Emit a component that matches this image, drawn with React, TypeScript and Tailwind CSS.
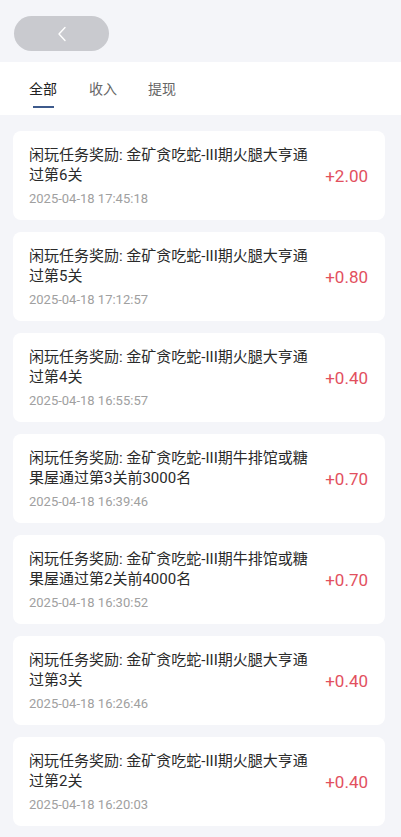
import React from "react";

const items = [
  { title: "闲玩任务奖励: 金矿贪吃蛇-III期火腿大亨通过第6关", time: "2025-04-18 17:45:18", amount: "+2.00" },
  { title: "闲玩任务奖励: 金矿贪吃蛇-III期火腿大亨通过第5关", time: "2025-04-18 17:12:57", amount: "+0.80" },
  { title: "闲玩任务奖励: 金矿贪吃蛇-III期火腿大亨通过第4关", time: "2025-04-18 16:55:57", amount: "+0.40" },
  { title: "闲玩任务奖励: 金矿贪吃蛇-III期牛排馆或糖果屋通过第3关前3000名", time: "2025-04-18 16:39:46", amount: "+0.70" },
  { title: "闲玩任务奖励: 金矿贪吃蛇-III期牛排馆或糖果屋通过第2关前4000名", time: "2025-04-18 16:30:52", amount: "+0.70" },
  { title: "闲玩任务奖励: 金矿贪吃蛇-III期火腿大亨通过第3关", time: "2025-04-18 16:26:46", amount: "+0.40" },
  { title: "闲玩任务奖励: 金矿贪吃蛇-III期火腿大亨通过第2关", time: "2025-04-18 16:20:03", amount: "+0.40" },
];

export default function App() {
  return (
    <div
      className="min-h-[837px] w-[401px] bg-[#f4f5f9] overflow-hidden"
      style={{ fontFamily: 'Roboto, "Noto Sans CJK SC", sans-serif' }}
    >
      <div className="h-[62px] pl-[14px] pt-[16px]">
        <div className="flex h-[35px] w-[95px] items-center justify-center rounded-full bg-[#c9cacf]">
          <svg width="12" height="16" viewBox="0 0 12 16" fill="none">
            <path d="M9 1.5 L3 8 L9 14.5" stroke="#ffffff" strokeWidth="1.4" strokeLinecap="round" strokeLinejoin="round" />
          </svg>
        </div>
      </div>
      <div className="flex h-[53px] items-start bg-white pl-[29px]">
        <div className="flex flex-col items-center pt-[17px]">
          <span className="text-[14px] leading-[20px] text-[#222222]">全部</span>
          <div className="mt-[7px] h-[2px] w-[21px] bg-[#3d5a8c]" />
        </div>
        <span className="ml-[32px] pt-[17px] text-[14px] leading-[20px] text-[#666666]">收入</span>
        <span className="ml-[31px] pt-[17px] text-[14px] leading-[20px] text-[#666666]">提现</span>
      </div>
      <div className="flex flex-col gap-[12px] pl-[13px] pr-[16px] pt-[16px]">
        {items.map((it, i) => (
          <div key={i} className="flex h-[89px] items-center justify-between rounded-[8px] bg-white pl-[16px] pr-[17px]">
            <div className="flex flex-col pt-[1px]">
              <div className="w-[280px] text-[15px] leading-[20px] text-[#2a2a2a]">{it.title}</div>
              <div className="mt-[5px] text-[13px] leading-[17px] text-[#a0a0a0]">{it.time}</div>
            </div>
            <div className="text-[17px] leading-[20px] text-[#e2505e]">{it.amount}</div>
          </div>
        ))}
      </div>
    </div>
  );
}
